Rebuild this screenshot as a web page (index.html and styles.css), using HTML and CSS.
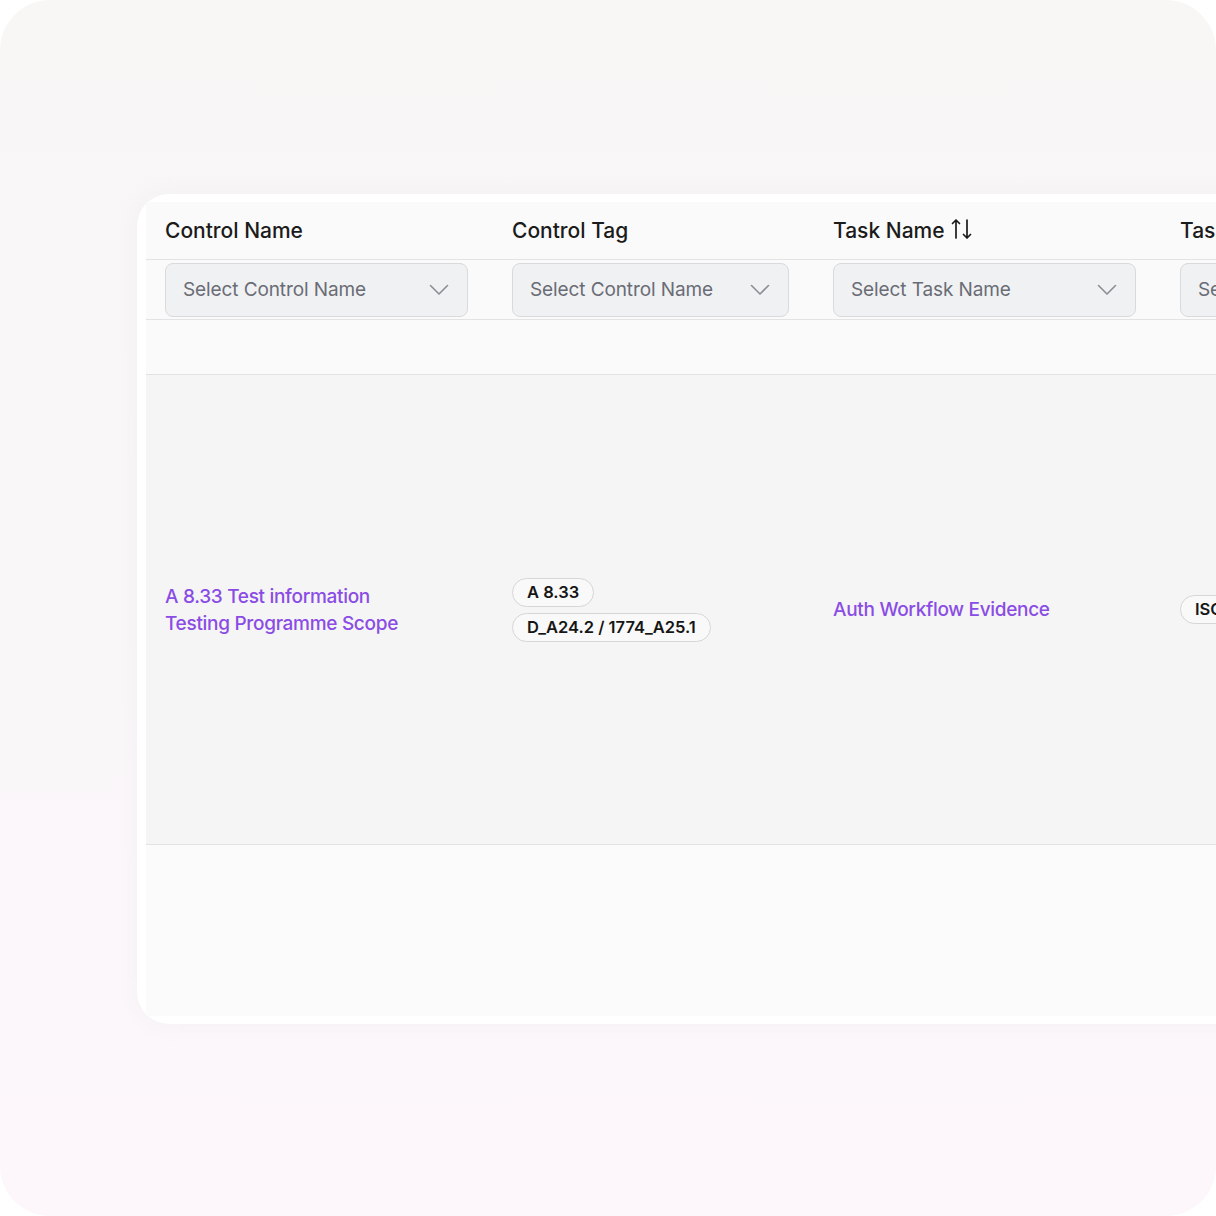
FILE: index.html
```html
<!DOCTYPE html>
<html>
<head>
<meta charset="utf-8">
<link rel="stylesheet" href="styles.css">
</head>
<body>
<div class="frame">
  <div class="card">
    <div class="table">
      <div class="row head">
        <div class="cell"><span class="th">Control Name</span></div>
        <div class="cell"><span class="th">Control Tag</span></div>
        <div class="cell"><span class="th">Task Name</span>
          <svg class="sort" width="24" height="24" viewBox="0 0 24 24" fill="none" stroke="#1a1a1a" stroke-width="1.7" stroke-linecap="round" stroke-linejoin="round">
            <path d="M6 21V3M2.5 6.5L6 3l3.5 3.5"/>
            <path d="M17 3v18M13.5 17.5L17 21l3.5-3.5"/>
          </svg>
        </div>
        <div class="cell"><span class="th">Task Type</span></div>
      </div>
      <div class="row filters">
        <div class="cell"><div class="select"><span>Select Control Name</span><svg width="20" height="12" viewBox="0 0 20 12" fill="none" stroke="#8b8e94" stroke-width="1.6" stroke-linecap="round" stroke-linejoin="round"><path d="M1.5 1.5L10 10l8.5-8.5"/></svg></div></div>
        <div class="cell"><div class="select"><span>Select Control Name</span><svg width="20" height="12" viewBox="0 0 20 12" fill="none" stroke="#8b8e94" stroke-width="1.6" stroke-linecap="round" stroke-linejoin="round"><path d="M1.5 1.5L10 10l8.5-8.5"/></svg></div></div>
        <div class="cell"><div class="select"><span>Select Task Name</span><svg width="20" height="12" viewBox="0 0 20 12" fill="none" stroke="#8b8e94" stroke-width="1.6" stroke-linecap="round" stroke-linejoin="round"><path d="M1.5 1.5L10 10l8.5-8.5"/></svg></div></div>
        <div class="cell"><div class="select"><span>Select Task Type</span><svg width="20" height="12" viewBox="0 0 20 12" fill="none" stroke="#8b8e94" stroke-width="1.6" stroke-linecap="round" stroke-linejoin="round"><path d="M1.5 1.5L10 10l8.5-8.5"/></svg></div></div>
      </div>
      <div class="row empty"></div>
      <div class="row data">
        <div class="cell"><a class="link">A 8.33 Test information<br>Testing Programme Scope</a></div>
        <div class="cell"><div class="tags"><span class="pill">A 8.33</span><span class="pill">D_A24.2 / 1774_A25.1</span></div></div>
        <div class="cell"><a class="link">Auth Workflow Evidence</a></div>
        <div class="cell"><span class="pill">ISO 27001</span></div>
      </div>
      <div class="rest"></div>
    </div>
  </div>
</div>
</body>
</html>
```

FILE: styles.css
```css
* { box-sizing: border-box; }
html, body { margin: 0; padding: 0; background: #ffffff; }
body { font-family: Inter, "Noto Sans", sans-serif; }

.frame {
  width: 1216px;
  height: 1216px;
  border-radius: 50px;
  overflow: hidden;
  background: linear-gradient(180deg, #f8f7f6 0%, #f9f7f8 50%, #fdf7fc 100%);
  padding: 194px 0 0 137px;
}

.card {
  width: 1300px;
  height: 830px;
  background: #ffffff;
  border-radius: 32px 0 0 32px;
  padding: 8px 0 8px 9px;
  box-shadow: 0 0 20px rgba(235, 230, 235, 0.4);
}

.table {
  height: 100%;
  background: #fafafa;
  display: flex;
  flex-direction: column;
}

.row {
  display: grid;
  grid-template-columns: 347px 321px 347px 347px;
  padding-left: 19px;
  border-bottom: 1px solid #e3e3e3;
}

.cell {
  display: flex;
  align-items: center;
  padding-right: 44px;
  min-width: 0;
}

.head { height: 58px; }
.th {
  font-size: 21px;
  font-weight: 500;
  color: #1b1b1b;
  letter-spacing: 0;
  white-space: nowrap;
}
.sort { margin-left: 5px; margin-top: -3px; }

.filters { height: 60px; }
.select {
  width: 100%;
  height: 54px;
  border: 1px solid #d9dadd;
  border-radius: 8px;
  background: #f0f1f3;
  display: flex;
  align-items: center;
  justify-content: space-between;
  padding: 0 18px 0 17px;
  white-space: nowrap;
  overflow: hidden;
}
.select span {
  font-size: 19px;
  color: #6a6c75;
  letter-spacing: -0.1px;
}
.select svg { flex: none; }

.empty { height: 55px; }

.data {
  height: 470px;
  background: #f5f5f5;
}

.link {
  font-size: 19px;
  line-height: 27px;
  color: #8a4ce4;
  font-weight: 500;
  letter-spacing: -0.3px;
  white-space: nowrap;
}

.tags {
  display: flex;
  flex-direction: column;
  align-items: flex-start;
  gap: 6px;
}

.pill {
  display: inline-block;
  height: 29px;
  line-height: 27px;
  padding: 0 14px;
  border: 1px solid #d6d6d6;
  border-radius: 15px;
  background: #f9f9f9;
  font-size: 16.5px;
  font-weight: 600;
  color: #161616;
  white-space: nowrap;
  letter-spacing: 0;
}

.rest { flex: 1; background: #fbfbfb; }
```
